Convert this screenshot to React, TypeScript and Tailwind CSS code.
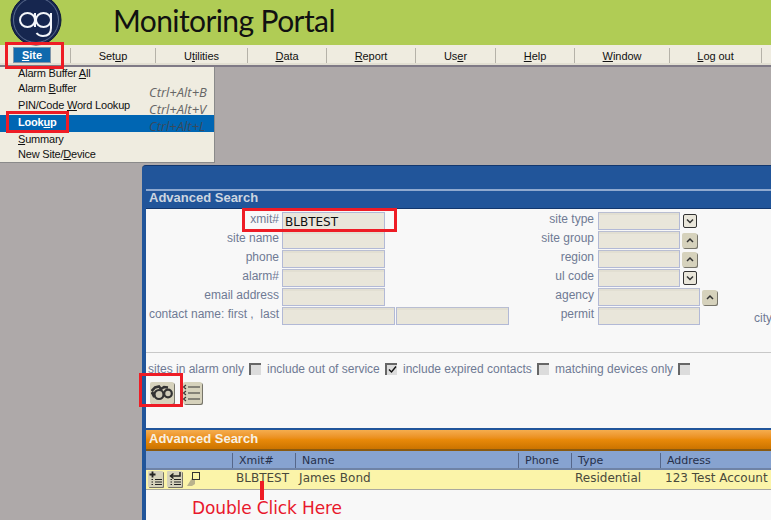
import { ReactNode } from "react";

const menuItems: { before: string; key: string; after: string; w: string }[] = [
  { before: "Set", key: "u", after: "p", w: "w-[85px]" },
  { before: "U", key: "t", after: "ilities", w: "w-[92px]" },
  { before: "", key: "D", after: "ata", w: "w-[79px]" },
  { before: "", key: "R", after: "eport", w: "w-[89px]" },
  { before: "Us", key: "e", after: "r", w: "w-[80px]" },
  { before: "", key: "H", after: "elp", w: "w-[79px]" },
  { before: "", key: "W", after: "indow", w: "w-[95px]" },
  { before: "", key: "L", after: "og out", w: "w-[92px]" },
];

function Logo() {
  return (
    <svg width="52" height="52" viewBox="0 0 52 52" className="absolute left-[10px] top-[-6px]">
      <circle cx="26" cy="26" r="25" fill="#16264f" stroke="#0d1836" strokeWidth="1" />
      <circle cx="26" cy="26" r="22.5" fill="none" stroke="#6f7f9f" strokeWidth="0.8" />
      <g fill="none" stroke="#f4f6fa" strokeWidth="2">
        <ellipse cx="17.5" cy="26" rx="7.5" ry="7" />
        <path d="M25 19v14" />
        <ellipse cx="33.5" cy="26" rx="7.5" ry="7" />
        <path d="M41 19v15c0 5-3 8-8 8-3 0-5-1-6.500-3" />
      </g>
    </svg>
  );
}

function Field({ w = "w-[103px]" }: { w?: string }) {
  return <div className={`${w} h-[18px] shrink-0 border border-[#b2b9d6] border-t-[#b9bed2] bg-[#e9e6da] shadow-[inset_0_2px_0_#e2dfd2]`} />;
}

function Arrow({ up }: { up?: boolean }) {
  return up ? (
    <div className="mt-[2px] ml-[2px] w-[15px] h-[15px] rounded-[2px] shrink-0 bg-[#d6d2bc] shadow-[1px_1px_0_#77756a] flex items-center justify-center">
      <svg width="10" height="10" viewBox="0 0 10 10" fill="none" stroke="#333333" strokeWidth="1.500">
        <path d="M2 6L5 3L8 6" />
      </svg>
    </div>
  ) : (
    <div className="mt-[2px] ml-[3px] w-[14px] h-[14px] rounded-[2px] shrink-0 bg-[#e9e6da] border border-[#333333] flex items-center justify-center">
      <svg width="10" height="10" viewBox="0 0 10 10" fill="none" stroke="#333333" strokeWidth="1.500">
        <path d="M2 3.500L5 6.500L8 3.500" />
      </svg>
    </div>
  );
}

function Row({ label, labelW, children }: { label: string; labelW: string; children: ReactNode }) {
  return (
    <div className="flex h-[19px] items-start">
      <div className={`${labelW} shrink-0 text-right leading-[15px] whitespace-pre`}>{label}</div>
      {children}
    </div>
  );
}

function Check({ checked }: { checked?: boolean }) {
  return (
    <div className="w-[12px] h-[12px] shrink-0 border-t-2 border-l-2 border-t-[#666666] border-l-[#666666] bg-[#dcdcdc] flex items-center justify-center">
      {checked && (
        <svg width="9" height="9" viewBox="0 0 9 9" fill="none" stroke="#111111" strokeWidth="1.400">
          <path d="M1 4.500L3.500 7L8 1.500" />
        </svg>
      )}
    </div>
  );
}

function Binoculars() {
  return (
    <svg width="22" height="18" viewBox="0 0 22 18" fill="none">
      <path d="M0.500 7L4 3.500L8 2.500L10 5L13 3L17 3.500" stroke="#333333" strokeWidth="2.500" />
      <circle cx="8" cy="10.500" r="4.500" fill="#cfcbb8" stroke="#333333" strokeWidth="2.200" />
      <circle cx="17" cy="9.500" r="3.800" fill="#cfcbb8" stroke="#333333" strokeWidth="2.200" />
      <path d="M1 8L3.500 13" stroke="#333333" strokeWidth="3" />
    </svg>
  );
}

function ListIcon() {
  return (
    <svg width="19" height="22" viewBox="0 0 19 22" fill="none" stroke="#333333" strokeWidth="1.200">
      <path d="M5 5H17M5 11H17M5 17H17" />
      <path d="M3 3L0.500 5L3 7M3 9L0.500 11L3 13M3 15L0.500 17L3 19" />
    </svg>
  );
}

function AddIcon({ ret }: { ret?: boolean }) {
  return (
    <div className="w-[15px] h-[16px] bg-[#d6d2bc] rounded-[1px] shadow-[1px_1px_0_#77756a]">
      <svg width="15" height="16" viewBox="0 0 15 16" fill="none" stroke="#222222">
        {ret ? (
          <path d="M13 1V5H4M6.500 2.500L3.500 5L6.500 7.500" strokeWidth="1.500" />
        ) : (
          <path d="M4.500 0.500V6.500M1.500 3.500H7.500" strokeWidth="1.800" />
        )}
        <path d="M7 8.500H14M7 11H14M7 13.500H14M3.500 8.500H5M3.500 11H5M3.500 13.500H5" strokeWidth="1" />
      </svg>
    </div>
  );
}

function NoteIcon() {
  return (
    <svg width="14" height="16" viewBox="0 0 14 16">
      <path d="M0 15L5 7V2H8V13L5 15Z" fill="#b9b38c" />
      <rect x="5.500" y="1.500" width="7" height="7" fill="#fbf4a9" stroke="#333333" strokeWidth="1" />
    </svg>
  );
}

function MenuRow({ h, active, shortcut, pad, children }: { h: string; active?: boolean; shortcut?: string; pad?: string; children: ReactNode }) {
  return (
    <div className={`${h} flex items-start pl-[18px] ${active ? "bg-[#0066b3] text-white font-bold" : ""}`}>
      <span className="w-[131px] shrink-0 leading-[14px]">{children}</span>
      {shortcut && (
        <span className={`${pad} font-['Open_Sans',sans-serif] italic text-[13px] leading-[14px] tracking-normal ${active ? "text-[#3a4a5c] font-normal" : "text-[#666666]"}`}>{shortcut}</span>
      )}
    </div>
  );
}

export default function App() {
  return (
    <div className="relative w-[771px] h-[520px] overflow-hidden bg-[#aea9a9] font-['Liberation_Sans',Arial,sans-serif]">
      {/* Header */}
      <div className="relative h-[45px] bg-[#b0cc55]">
        <Logo />
        <div className="pl-[113px] font-['Lato',sans-serif] text-[30px] leading-[40px] tracking-[-0.6px] text-[#111111] whitespace-nowrap">Monitoring Portal</div>
      </div>

      {/* Menu bar */}
      <div className="flex h-[22px] bg-[#efece0] border-b-2 border-b-[#7f7a86] shadow-[inset_0_-2px_0_#e2dfd2] pt-[3px] text-[11px] text-[#111111]">
        <div className="w-[71px] h-[15px] shrink-0 border-r border-r-[#b5b2a8] pl-[14px]">
          <div className="w-[36px] h-[14px] bg-[#0f69ad] text-white font-bold text-center leading-[14px] outline outline-1 outline-[#7f95aa]">
            <u>S</u>ite
          </div>
        </div>
        {menuItems.map((m) => (
          <div key={m.after} className={`${m.w} h-[15px] shrink-0 border-r border-r-[#b5b2a8] text-center leading-[16px] tracking-[-0.05px]`}>
            {m.before}
            <u>{m.key}</u>
            {m.after}
          </div>
        ))}
      </div>

      {/* Site dropdown */}
      <div className="absolute left-0 top-[67px] w-[215px] h-[96px] z-10 bg-[#efece0] border-r border-b border-[#8a8a8a] text-[11px] tracking-[-0.2px] text-[#111111]">
        <MenuRow h="h-[14px]"><span className="block -mt-px">Alarm Buffer <u>A</u>ll</span></MenuRow>
        <MenuRow h="h-[15px]" shortcut="Ctrl+Alt+B" pad="pt-[4px]">Alarm <u>B</u>uffer</MenuRow>
        <MenuRow h="h-[19px]" shortcut="Ctrl+Alt+V" pad="pt-[6px]"><span className="block pt-[2px]">PIN/Code <u>W</u>ord Lookup</span></MenuRow>
        <MenuRow h="h-[17px]" active shortcut="Ctrl+Alt+L" pad="pt-[4px]">Look<u>u</u>p</MenuRow>
        <MenuRow h="h-[15px]"><u>S</u>ummary</MenuRow>
        <MenuRow h="h-[15px]">New Site/<u>D</u>evice</MenuRow>
      </div>

      {/* Advanced search window */}
      <div className="absolute left-[142px] top-[165px] w-[700px] h-[400px] rounded-tl-[4px] border-t border-t-[#12376e] bg-[#21559a] pl-[4px]">
        <div className="h-[23px]" />
        <div className="h-[20px] border-t-2 border-t-[#8fa9cf] border-b border-b-[#12376e] text-[13px] font-bold leading-[14px] pl-[3px] text-[#cdd5e0] whitespace-nowrap">
          Advanced Search
        </div>
        <div className="h-[219px] bg-[#f8f8f8]">
          {/* Search form */}
          <div className="flex h-[144px] border-b border-b-[#c8c8c8] pt-[3px] text-[12px] text-[#6f7a94]">
            <div className="w-[364px] shrink-0">
              <Row label="xmit#" labelW="w-[133px]">
                <div className="ml-[3px] w-[103px] h-[18px] border border-[#b2b9d6] bg-[#e9e6da] pl-[2px] font-['DejaVu_Sans',sans-serif] text-[12px] leading-[19px] text-[#111111]">BLBTEST</div>
              </Row>
              <Row label="site name" labelW="w-[133px]"><div className="ml-[3px]"><Field /></div></Row>
              <Row label="phone" labelW="w-[133px]"><div className="ml-[3px]"><Field /></div></Row>
              <Row label="alarm#" labelW="w-[133px]"><div className="ml-[3px]"><Field /></div></Row>
              <Row label="email address" labelW="w-[133px]"><div className="ml-[3px]"><Field /></div></Row>
              <Row label="contact name: first ,  last" labelW="w-[133px]">
                <div className="ml-[3px] flex gap-px"><Field w="w-[113px]" /><Field w="w-[113px]" /></div>
              </Row>
            </div>
            <div className="w-[244px] shrink-0">
              <Row label="site type" labelW="w-[84px]"><div className="ml-[4px]"><Field w="w-[82px]" /></div><Arrow /></Row>
              <Row label="site group" labelW="w-[84px]"><div className="ml-[4px]"><Field w="w-[82px]" /></div><Arrow up /></Row>
              <Row label="region" labelW="w-[84px]"><div className="ml-[4px]"><Field w="w-[82px]" /></div><Arrow up /></Row>
              <Row label="ul code" labelW="w-[84px]"><div className="ml-[4px]"><Field w="w-[82px]" /></div><Arrow /></Row>
              <Row label="agency" labelW="w-[84px]"><div className="ml-[4px]"><Field w="w-[102px]" /></div><Arrow up /></Row>
              <Row label="permit" labelW="w-[84px]"><div className="ml-[4px]"><Field w="w-[102px]" /></div></Row>
            </div>
            <div className="mt-[99px] leading-[15px]">city</div>
          </div>

          {/* Options */}
          <div className="flex items-center h-[29px] pl-[2px] pt-[2px] text-[12px] text-[#6f7a94] whitespace-nowrap">
            <span className="w-[101px]">sites in alarm only</span>
            <Check />
            <span className="ml-[6px] w-[118px]">include out of service</span>
            <Check checked />
            <span className="ml-[6px] w-[134px]">include expired contacts</span>
            <Check />
            <span className="ml-[6px] w-[123px]">matching devices only</span>
            <Check />
          </div>

          {/* Toolbar */}
          <div className="flex pl-[4px]">
            <div className="w-[24px] h-[22px] bg-[#d6d2bc] rounded-[2px] shadow-[1px_1px_0_#77756a] flex items-center justify-center"><Binoculars /></div>
            <div className="ml-[9px] w-[19px] h-[22px] bg-[#d6d2bc] rounded-[2px] shadow-[1px_1px_0_#77756a]"><ListIcon /></div>
          </div>
        </div>

        {/* Results */}
        <div className="h-[2px] bg-[#21559a]" />
        <div className="h-[21px] border-b-2 border-b-[#8a5a10] bg-gradient-to-b from-[#f5ad4d] via-[#e98a0a] to-[#cb7400] pl-[3px] text-[13px] font-bold leading-[17px] text-[#f7f1e4] whitespace-nowrap">
          Advanced Search
        </div>
        <div className="flex h-[19px] border-b-2 border-b-[#6f83a6] bg-[#87a3d0] pt-[2px] font-['DejaVu_Sans',sans-serif] text-[11px] leading-[15px] text-[#26304a]">
          <div className="w-[87px] shrink-0 border-r border-r-[#56678a]" />
          <div className="w-[63px] shrink-0 border-r border-r-[#56678a] pl-[6px]">Xmit#</div>
          <div className="w-[223px] shrink-0 border-r border-r-[#56678a] pl-[6px]">Name</div>
          <div className="w-[53px] shrink-0 border-r border-r-[#56678a] pl-[6px]">Phone</div>
          <div className="w-[89px] shrink-0 border-r border-r-[#56678a] pl-[6px]">Type</div>
          <div className="pl-[6px]">Address</div>
        </div>
        <div className="flex h-[20px] border-b border-b-[#a8a8a0] bg-[#fbf4a9] font-['DejaVu_Sans',sans-serif] text-[12px] leading-[16px] text-[#4a4a3c]">
          <div className="flex w-[87px] shrink-0 gap-[4px] pl-[2px] pt-[1px]">
            <AddIcon />
            <AddIcon ret />
            <div className="ml-[1px]"><NoteIcon /></div>
          </div>
          <div className="w-[66px] shrink-0 pl-[3px] whitespace-nowrap">BLBTEST</div>
          <div className="w-[276px] shrink-0 tracking-[0.1px]">James Bond</div>
          <div className="w-[90px] shrink-0">Residential</div>
          <div className="whitespace-nowrap">123 Test Account</div>
        </div>
        <div className="h-[80px] bg-[#f8f8f8]">
          <div className="pl-[46px] pt-[8px] font-['DejaVu_Sans',sans-serif] text-[17px] leading-[20px] tracking-[-0.12px] text-[#e8182c] whitespace-nowrap">Double Click Here</div>
        </div>
      </div>

      {/* Red annotations */}
      <div className="absolute left-[5px] top-[42px] w-[59px] h-[27px] border-[3px] border-[#ee1c25] z-20" />
      <div className="absolute left-[6px] top-[111px] w-[63px] h-[22px] border-[3px] border-[#ee1c25] z-20" />
      <div className="absolute left-[242px] top-[208px] w-[155px] h-[24px] border-[3px] border-[#ee1c25] z-20" />
      <div className="absolute left-[139px] top-[373px] w-[44px] h-[34px] border-[3px] border-[#ee1c25] z-20" />
      <div className="absolute left-[260px] top-[481px] w-[4px] h-[19px] bg-[#ee1c25] z-20" />
    </div>
  );
}
